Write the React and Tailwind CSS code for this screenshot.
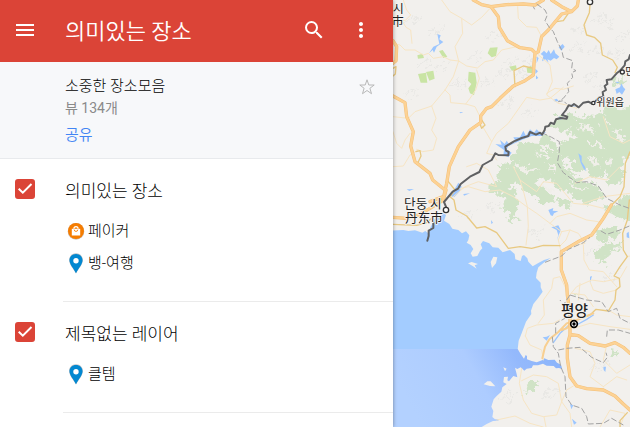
import { useState } from 'react';
import { MdMenu, MdSearch, MdMoreVert } from 'react-icons/md';

const LAYERS = [
  {
    id: 'places',
    title: '의미있는 장소',
    items: [
      { name: '페이커', icon: 'bag' },
      { name: '뱅-여행', icon: 'pin' },
    ],
  },
  {
    id: 'untitled',
    title: '제목없는 레이어',
    items: [{ name: '클템', icon: 'pin' }],
  },
];

// map geometry, three units to a pixel
const UPPER_SEA = 'M0 692L40 690 55 693 75 691 97 698 106 693 115 700 122 680 130 667 132 658 145 652 160 640 168 645 162 662 178 672 187 686 205 690 216 700 228 694 238 706 235 720 230 728 242 735 250 747 242 760 248 770 262 768 270 752 277 745 272 733 279 723 298 730 308 742 325 743 338 757 360 750 374 762 376 778 392 783 396 768 402 765 412 775 415 785 428 799 445 789 462 780 482 774 461 788 445 802 440 818 438 834 452 848 452 862 458 875 445 893 430 912 423 932 424 942 408 965 395 1000 386 1022 383 1048 0 1048Z';
const LOWER_SEA = 'M0 1047L383 1047 392 1062 402 1076 407 1065 411 1068 411 1078 425 1083 440 1087 458 1080 463 1075 475 1080 494 1079 501 1088 513 1094 517 1108 507 1104 498 1105 491 1098 470 1097 459 1091 444 1096 429 1096 425 1104 410 1106 403 1112 392 1102 382 1107 375 1103 379 1118 382 1132 370 1128 363 1136 357 1144 352 1141 354 1130 342 1131 340 1147 350 1152 337 1162 334 1175 320 1188 311 1198 304 1220 310 1233 307 1251 315 1258 327 1257 325 1262 309 1263 290 1272 275 1281 0 1281Z';

const GREENS = [
  'M385 432L420 424 445 426 462 406 480 414 502 440 508 470 528 502 562 532 592 545 625 555 637 580 628 604 602 606 590 616 558 598 538 574 500 564 480 540 465 544 448 534 440 550 457 565 482 580 492 602 470 614 443 600 422 580 402 574 382 554 366 532 350 506 335 495 360 488 370 480 355 465 375 452Z',
  'M478 375L508 348 545 344 570 350 600 346 618 348 648 316 690 328 740 320 740 465 702 474 692 500 708 522 692 550 660 555 642 545 656 524 642 519 625 540 598 524 583 509 558 519 536 504 556 484 536 469 516 484 504 455 518 428 540 418 560 410 528 402 540 387 512 397 498 387Z',
  'M325 500L347 496 358 518 376 528 376 552 354 557 378 575 388 600 380 622 382 642 370 652 360 676 350 668 358 637 340 627 346 600 342 587 318 582 294 565 310 546 333 541 322 530Z',
  'M668 240L690 232 710 238 700 260 680 258Z',
  'M650 615L680 618 700 592 740 586 740 658 690 658 670 642 646 632Z',
  'M618 690L650 683 674 680 694 702 667 712 640 728 622 715Z',
  'M624 745L655 727 694 733 672 758 652 760 657 772 625 788 612 770Z',
  'M648 800L660 792 652 805Z',
  'M498 598L525 596 548 612 525 628 502 614Z',
  'M408 1150L428 1138 444 1150 427 1175 400 1178Z',
  'M664 1045L684 1048 680 1072 661 1070Z',
  'M552 878L566 880 560 892Z',
  'M368 653L387 653 380 667Z',
];

const CLEARINGS = [
  'M380 490L400 500 425 505 450 515 420 512 400 518 380 505Z',
  'M430 455L450 465 475 462 485 475 455 472 435 465Z',
  'M470 490L490 500 500 515 485 512Z',
  'M565 372L600 380 615 395 590 392 570 385Z',
  'M600 425L630 430 650 445 625 440 600 436Z',
  'M668 385L690 400 705 430 685 420Z',
  'M590 470L620 480 630 500 605 490Z',
  'M430 550L470 555 500 575 465 568Z',
  'M645 480L668 475 660 495Z',
  'M530 540L570 560 600 572 565 572Z',
  'M640 350L655 365 640 375Z',
  'M440 442L470 436 490 450 460 450Z',
];

const PARKS = [
  'M84 222L108 218 112 248 92 248Z',
  'M108 216L130 212 134 236 118 242Z',
  'M82 166L98 161 102 174 84 176Z',
  'M147 153L158 150 172 170 160 174Z',
  'M300 143L323 142 318 168 305 172 293 160Z',
  'M236 215L256 218 260 248 252 286 240 280 235 265 244 252 234 242Z',
  'M358 200L378 196 380 208 366 212Z',
  'M410 204L424 197 428 220 412 218Z',
];

const MINOR_ROADS = [
  'M40 0L50 30 62 45 45 62 35 60 48 82 62 90 66 130',
  'M9 130L30 135 45 150 75 150 100 165 115 160 130 175 160 170 180 180 206 183',
  'M155 0L180 35 215 55 245 75 275 52 303 22',
  'M215 55L218 100 195 140 206 183 230 198 262 204 285 185 310 180 335 150 380 140 412 148',
  'M206 183L190 230 165 270 125 318 75 335 55 355 9 350',
  'M165 270L180 285 182 308 227 312 255 320 270 350',
  'M125 318L138 355 125 390 140 415 130 450 98 455 80 448',
  'M227 312L240 295 257 270 268 235 260 210',
  'M9 395L20 430 35 445 45 420 60 400',
  'M9 500L40 498 60 465 85 450',
  'M275 375L290 400 305 425 320 400 355 370 410 292 450 300 480 295 520 262',
  'M305 425L290 460 310 465 320 480',
  'M383 20L385 55 410 80 440 82 455 110',
  'M440 160L480 195 487 245 470 285 505 310',
  'M470 280L495 265 520 268 550 258',
  'M505 310L530 315 560 325',
  'M190 570L235 560 285 575 330 570 370 590 410 620 440 640 480 670 515 695 540 690 565 700 585 730 560 735',
  'M230 500L260 490 295 510 320 560 265 545 225 560 190 590',
  'M370 500L390 540 402 580 412 620 415 680 408 735',
  'M390 540L440 575 460 545 500 550 550 610 600 615 640 625',
  'M480 670L500 650 540 640 590 660 625 665',
  'M540 690L528 720 508 740',
  'M515 695L505 720 512 750',
  'M530 870L510 830 490 835 485 865 460 900 463 945 445 970',
  'M535 890L560 860 605 840 640 845 690 835 710 800',
  'M580 735L582 780 598 810 640 815 680 860',
  'M406 1008L412 985 440 975 490 970 508 960',
  'M406 1008L420 1035 455 1050 460 1080',
  'M395 1105L388 1150 400 1200 425 1240 460 1250 500 1245 515 1205 505 1150 470 1130 430 1125 395 1142',
  'M462 1250L468 1281M320 1260L375 1248 420 1270 460 1281',
  'M515 1205L540 1240 545 1281M515 1205L530 1170 550 1158',
  'M550 985L600 970 660 980 720 988',
  'M555 1045L600 1055 615 1090 600 1130 640 1160',
  'M650 1035L640 1080 680 1120 720 1095',
  'M640 1160L680 1130 710 1140M690 1281L705 1240 660 1230 630 1281',
  'M600 845L610 870 640 880 680 870M570 850L565 900',
  'M610 920L585 885 545 880M655 930L680 945 720 950',
  'M555 550L600 530 650 540 690 500M640 350L660 410 700 430 720 420',
  'M580 610L640 590 720 580M710 770L720 768',
];

const BROWN_ROADS = [
  'M600 15L598 38 582 75 590 105 613 112 632 130 637 165 668 180 682 202 675 218',
  'M180 590L192 600 198 630 230 648 260 684 285 680 320 698 355 745 390 740 425 745 460 736 510 737',
  'M720 455L706 490 702 560 690 590 665 615',
  'M718 600L712 660 698 700 700 750 712 770 690 800 672 828 688 835 690 860 678 870 675 900 655 933 618 928 600 945 570 955',
  'M375 260L372 212 400 198 425 204M268 368L275 385 285 375 272 355M78 455L90 452 93 468 82 492',
  'M9 205L18 200 16 222 9 228M9 673L80 676 110 668 130 650M175 545L195 570 180 590',
  'M500 65L520 62 535 40M690 1281L690 1262 712 1238',
];

const MAIN_ROADS = [
  'M250 0L275 14 303 20 350 14 400 12 435 15 460 0',
  'M303 20L325 50 328 82 352 122 390 143 425 148 435 158',
  'M485 0L515 20 545 35 562 18 565 0M545 35L515 42 475 90 455 110 445 155 435 160 432 190 430 225 405 242 370 258 330 295 305 320 290 325 272 348 272 368 240 390 205 440 178 500 170 550 160 595',
  'M9 288L45 308 50 350 70 395 62 438 75 485 120 520 128 540 165 570',
  'M9 652L50 655 85 645 120 625 160 600 168 570M120 605L160 590',
  'M9 122L20 140 18 182 9 190',
  'M664 615L640 655 605 705 570 722 514 755 514 810 530 855 532 885 540 940 540 975 540 1005',
  'M540 1005L532 1035 532 1075 540 1130 560 1158 590 1166 640 1170 675 1188 700 1212 720 1230',
  'M540 1003L565 1007 600 1030 645 1038 675 1028 700 1042 720 1060',
];

const SIDE_ROADS = [
  'M457 1075L465 1040 478 1018 505 996 530 970 560 960 610 940',
  'M515 990L530 985 548 962',
];

const LAKES = [
  'M142 102L152 106 148 118 160 126 140 140 132 158 128 150 117 160 130 140 148 132Z',
  'M462 152L470 160 476 150 482 162 492 148 496 160 508 170 500 178 492 174 482 182 472 178 476 188 466 178 456 184 460 168 452 162Z',
  'M506 142L518 132 524 140 514 152ZM440 170L446 174 440 190ZM436 206L444 214 436 222ZM438 226L445 234 438 238Z',
  'M500 296L506 302 496 306 490 300ZM50 568L72 567 58 573ZM208 336L220 337 212 340Z',
  'M316 432L335 434 330 420 344 432 350 422 358 434 378 425 370 412 390 412 400 392 408 408 420 388 432 398 440 388 450 398 468 396 456 408 425 408 395 420 356 438 350 448 365 458 355 472 340 466 342 450Z',
  'M676 268L690 262 694 250 700 262 706 268 696 284 688 276 680 282ZM675 245L690 246 682 250Z',
  'M565 460L575 468 575 485 585 500 588 514 580 505 572 488Z',
  'M475 630L490 624 488 632 505 634 492 640 488 648 482 646ZM484 682L505 676 512 690 500 722 505 705 500 690Z',
  'M600 830L606 828 600 848ZM710 700L716 695 718 715 710 712ZM303 660L309 668 304 672Z',
  'M458 1012L470 1010 480 1005 470 1022ZM640 1100L648 1100 646 1116 641 1110ZM540 1212L550 1216 544 1228ZM546 1256L560 1268 552 1274Z',
  'M205 548L215 560 208 576 192 592 182 588ZM220 582L240 580 222 587Z',
  'M538 318L548 312 556 320ZM505 350L520 352 510 360Z',
];

const RAILS = [
  'M430 20L434 28M440 12L465 30 472 45 465 62 478 82 490 95 502 125 515 150 520 172 548 182 545 205 558 212 545 218 548 232 532 250 536 275 520 295 505 305 520 302 530 312',
  'M455 398L485 412 508 425 508 455 502 488 520 518 560 548 590 545 625 558 650 595 690 615 718 625',
  'M718 678L690 690 650 703 628 690M465 787L515 768 535 748 580 728 600 712',
  'M540 885L520 915 510 900M540 885L590 900 635 905 655 935 680 925 690 955 720 970',
  'M497 1000L497 970 525 955M487 1010L490 1040 505 1060 512 1100 525 1130 528 1190 545 1215 575 1225 590 1250 595 1272 640 1270 665 1255 700 1275',
  'M505 1050L530 1045 570 1042 605 1072 640 1088 652 1072 648 1058M650 1010L652 990 685 990 720 1000',
];

const BORDER = 'M720 165L716 178 706 184 704 196 690 212 680 220 664 238 650 240 652 252 644 258 648 270 638 276 640 290 628 292 618 302 608 312 595 305 580 308 566 322 552 312 545 318 536 316 528 330 516 345 532 350 530 356 512 354 498 358 492 372 482 368 476 378 466 380 464 390 456 404 450 398 438 404 420 396 415 408 395 414 372 424 346 440 348 452 356 456 355 466 325 465 316 460 305 480 278 495 268 516 240 530 212 552 204 566 188 575 162 606 170 625';

const RELIEF = [
  [60, 60], [130, 90], [300, 110], [100, 190], [150, 200], [250, 170], [330, 220], [280, 250],
  [410, 180], [350, 185], [390, 220], [560, 90], [610, 150], [650, 70], [690, 110], [560, 140],
  [620, 60], [670, 160], [590, 230], [620, 260], [200, 250], [60, 280], [340, 310], [410, 340],
  [230, 640], [300, 620], [430, 700], [600, 760], [660, 830], [620, 1100], [350, 1190], [470, 1180],
];

function MapCanvas() {
  return (
    <svg viewBox="9 0 711 1281" preserveAspectRatio="xMinYMin slice" className="block h-full w-full"
      role="img" aria-label="지도">
      <defs>
        <linearGradient id="bay" x1="0" x2="1" y1="0.25" y2="0">
          <stop offset="0" stopColor="#b3d1ff" />
          <stop offset="0.45" stopColor="#adccff" />
          <stop offset="0.72" stopColor="#94b9fc" />
          <stop offset="1" stopColor="#8ab4fb" />
        </linearGradient>
        <filter id="rough" x="-5%" y="-5%" width="110%" height="110%">
          <feTurbulence type="fractalNoise" baseFrequency="0.06" numOctaves="4" seed="4" />
          <feDisplacementMap in="SourceGraphic" scale="40" xChannelSelector="R" yChannelSelector="G" />
        </filter>
      </defs>
      <rect width="3000" height="1281" fill="#f2f0ed" />

      <g fill="none" stroke="#e9e8e5" strokeWidth="5" strokeLinecap="round" filter="url(#rough)">
        {RELIEF.map(([x, y]) => (
          <path key={`${x}-${y}`} d={`M${x - 14} ${y + 7}l10 -9M${x + 2} ${y - 2}l9 -10M${x + 8} ${y + 12}l12 -8M${x + 24} ${y - 6}l6 -7`} />
        ))}
      </g>
      <g filter="url(#rough)">
        <path d={GREENS.join('')} fill="#d0e3c6" />
        <path d={CLEARINGS.join('')} fill="#f0efe9" />
      </g>
      <path d={PARKS.join('')} fill="#c9e4a4" />

      <path d={UPPER_SEA} fill="#a3ccff" />
      <path d={LOWER_SEA} fill="url(#bay)" />
      <g fill="#f2f0ed">
        <path d="M234 790L245 786 264 792 254 796 260 806 248 798ZM302 786L310 770 322 772 318 790 306 804ZM340 1102L350 1106 345 1114ZM281 1153L292 1144 302 1144 316 1159 300 1158Z" />
      </g>
      <path d={LAKES.join('')} fill="#9cc6ff" />

      <g fill="none" strokeLinejoin="round" strokeLinecap="round">
        <path d={MINOR_ROADS.join('')} stroke="#f7e5c4" strokeWidth="3" />
        <path d="M610 945L590 958 565 972 545 968 510 1000 490 1028" stroke="#9cc6ff" strokeWidth="4" />
        <path d={BROWN_ROADS.join('')} stroke="#e8c982" strokeWidth="4" />
        <path d={SIDE_ROADS.join('')} stroke="#f8cf91" strokeWidth="6" />
        <path d={MAIN_ROADS.join('')} stroke="#f3c07a" strokeWidth="10" />
        <path d={MAIN_ROADS.join('')} stroke="#fdd294" strokeWidth="7" />
        <path d={RAILS.join('')} stroke="#a3a3a3" strokeWidth="3" strokeDasharray="18 7" strokeLinecap="butt" />
        <path d={BORDER} stroke="#5f6062" strokeWidth="6" />
        <path d="M130 668L130 684 116 692 116 708 112 722" stroke="#5f6062" strokeWidth="6" />
      </g>

      <g fill="#fff" stroke="#333" strokeWidth="4">
        <circle cx="168" cy="630" r="8" />
        <circle cx="600" cy="6" r="8" />
        <circle cx="697" cy="216" r="6" />
        <circle cx="610" cy="309" r="5" />
      </g>
      <circle cx="552" cy="972" r="10" fill="#fff" stroke="#000" strokeWidth="5" />
      <circle cx="552" cy="972" r="5" fill="#000" />

      <g className="font-['Noto_Sans_CJK_KR',sans-serif] font-normal" fill="#222" stroke="#f7f5f2" strokeWidth="5"
        strokeLinejoin="round" paintOrder="stroke">
        <text fontSize="36">
          <tspan x="8" y="39">시</tspan>
          <tspan x="5" y="77">市</tspan>
        </text>
        <text fontSize="38">
          <tspan x="42" y="625">단둥 시</tspan>
          <tspan x="45" y="666">丹东市</tspan>
        </text>
        <text x="619" y="319" fontSize="30">위원읍</text>
        <text x="706" y="226" fontSize="30">만</text>
        <text x="513" y="949" fontSize="44" fontWeight="500">평양</text>
      </g>
    </svg>
  );
}

function StarIcon() {
  return (
    <svg viewBox="0 0 18 18" className="h-[18px] w-[18px]" fill="none" stroke="#b8b8b8" strokeWidth="1">
      <path d="M9 1.800L10.800 7H16.200L11.900 10.300 13.500 15.700 9 12.500 4.500 15.700 6.100 10.300 1.800 7H7.200Z" />
    </svg>
  );
}

function PinIcon() {
  return (
    <svg viewBox="0 0 14 21" className="h-[21px] w-[14px]">
      <path d="M7 .3C3 .3 .1 3.200.1 7.100c0 4.600 4.300 8.600 6.900 13.400 2.600-4.800 6.900-8.800 6.900-13.400C13.900 3.200 11 .3 7 .3Z" fill="#b9bec3" />
      <path d="M7 1C3.400 1 .5 3.700.5 7.200c0 4.300 4.200 7.800 6.500 13 2.300-5.200 6.500-8.700 6.500-13C13.500 3.700 10.600 1 7 1Z" fill="#0288d1" />
      <circle cx="7" cy="7.800" r="2.700" fill="#fff" />
    </svg>
  );
}

function BagIcon() {
  return (
    <svg viewBox="0 0 18 18" className="h-[18px] w-[18px]">
      <circle cx="9" cy="9.400" r="8.300" fill="#c9c2bb" />
      <circle cx="9" cy="9" r="8" fill="#f57c00" />
      <path d="M4.800 6.800h8.400v6.700H4.800Z" fill="#fff" />
      <path d="M6.900 6.800a2.100 2.100 0 0 1 4.200 0" fill="none" stroke="#fff" strokeWidth="1.200" />
      <path d="M7.200 7.600a1.800 1.800 0 0 0 3.600 0" fill="none" stroke="#f57c00" strokeWidth="0.900" />
    </svg>
  );
}

function Layer({ layer }) {
  const [visible, setVisible] = useState(true);

  return (
    <section className="flex pl-[15px]">
      <div className="mt-5 grid h-5 w-5 shrink-0">
        <input id={layer.id} type="checkbox" checked={visible} onChange={(e) => setVisible(e.target.checked)}
          className="col-start-1 row-start-1 h-5 w-5 appearance-none rounded-[3px] border-2 border-[#db4437] bg-white checked:bg-[#db4437]" />
        {visible && (
          <svg viewBox="0 0 20 20" className="pointer-events-none col-start-1 row-start-1 h-5 w-5"
            fill="none" stroke="#fff" strokeWidth="2">
            <path d="M3.700 9.700L7.800 13.700 16.500 5" />
          </svg>
        )}
      </div>
      <div className="ml-7 flex-1 border-b border-[#ebebeb] pt-5 pb-[22px] pl-0.5">
        <label htmlFor={layer.id} className="block text-[17px] leading-6 text-black">{layer.title}</label>
        <ul className="mt-3">
          {layer.items.map((item) => (
            <li key={item.name} className="flex h-8 items-center gap-0.5 text-[15px] text-black">
              <span className="flex w-[21px] justify-center">
                {item.icon === 'bag' ? <BagIcon /> : <PinIcon />}
              </span>
              {item.name}
            </li>
          ))}
        </ul>
      </div>
    </section>
  );
}

export default function App() {
  return (
    <div className="flex h-screen overflow-hidden bg-white font-[Roboto,'Noto_Sans_CJK_KR',sans-serif] font-light">
      <aside className="z-10 w-[393px] shrink-0 overflow-hidden bg-white shadow-[0_0_4px_rgba(0,0,0,0.4)]">
        {/* Title bar */}
        <header className="flex h-[62px] items-center bg-[#db4437] pr-5 pb-0.5 pl-[13px] text-white">
          <button type="button" aria-label="메뉴">
            <MdMenu className="h-6 w-6" />
          </button>
          <h1 className="ml-7 flex-1 pt-0.5 text-[22px] font-[350]">의미있는 장소</h1>
          <div className="flex gap-[23px]">
            <button type="button" aria-label="검색">
              <MdSearch className="h-6 w-6" />
            </button>
            <button type="button" aria-label="더보기">
              <MdMoreVert className="h-6 w-6" />
            </button>
          </div>
        </header>

        {/* Map details */}
        <div className="flex items-start justify-between border-b border-[#e8eaed] bg-[#f7f8fa] pt-3 pr-[17px] pb-[11px] pl-[65px]">
          <div>
            <p className="text-[15px] leading-6 text-black">소중한 장소모음</p>
            <p className="text-[14px] leading-5 font-normal text-[#8a8a8a]">뷰 134개</p>
            <a href="#share" className="mt-[5px] block text-[15px] leading-6 font-[350] text-[#4285f4]">공유</a>
          </div>
          <button type="button" aria-label="별표" className="mt-1">
            <StarIcon />
          </button>
        </div>

        {LAYERS.map((layer) => <Layer key={layer.id} layer={layer} />)}
      </aside>

      <main className="min-w-0 flex-1">
        <MapCanvas />
      </main>
    </div>
  );
}
